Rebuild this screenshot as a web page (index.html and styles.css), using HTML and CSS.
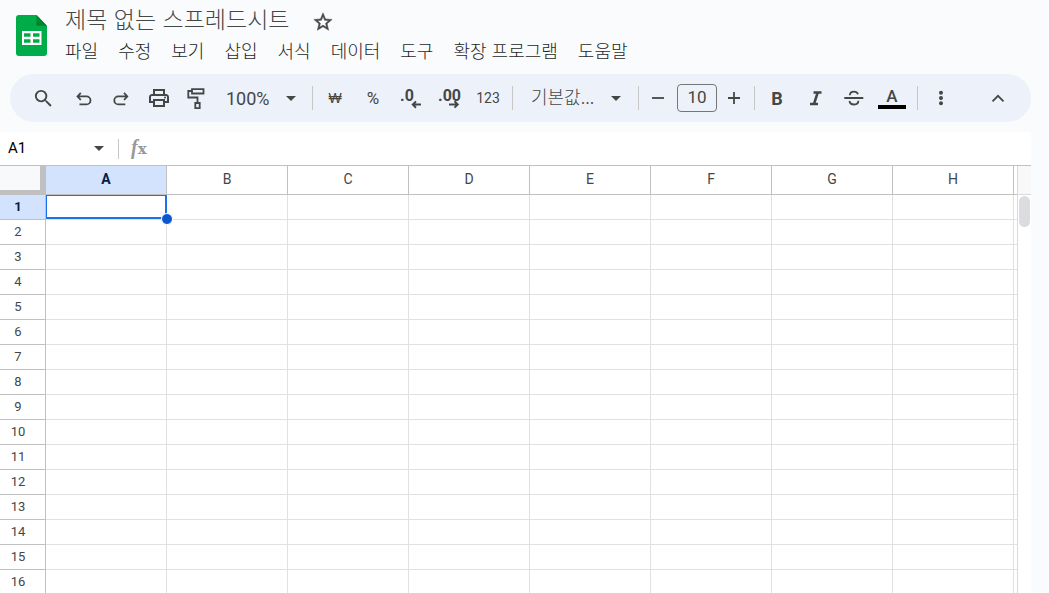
FILE: index.html
```html
<!DOCTYPE html>
<html lang="ko">
<head>
<meta charset="utf-8">
<title>제목 없는 스프레드시트</title>
<link rel="stylesheet" href="styles.css">
</head>
<body>
<header class="header">
  <svg class="logo" viewBox="0 0 31 41" aria-hidden="true">
    <path fill="#00ac47" d="M3 0H20.500L31 11V38a3 3 0 0 1-3 3H3a3 3 0 0 1-3-3V3a3 3 0 0 1 3-3z"/>
    <path fill="#00832d" d="M20.500 0L31 10.700H20.500z"/>
    <path fill="#fff" fill-rule="evenodd" d="M6 16H25.500V30H6zM8 18.300V21.700H14.500V18.300zM17 18.300V21.700H23.500V18.300zM8 24.200V27.700H14.500V24.200zM17 24.200V27.700H23.500V24.200z"/>
  </svg>
  <div class="header-main">
    <div class="title-row">
      <h1 class="title">제목 없는 스프레드시트</h1>
      <button class="star" aria-label="별표">
        <svg class="star-icon" viewBox="0 0 24 24"><path stroke="currentColor" stroke-width=".5" d="M22 9.240l-7.190-.62L12 2 9.190 8.630 2 9.240l5.460 4.730L5.820 21 12 17.270 18.180 21l-1.630-7.030L22 9.240zM12 15.400l-3.760 2.270 1-4.280-3.320-2.880 4.380-.38L12 6.100l1.710 4.040 4.380.38-3.320 2.880 1 4.280L12 15.400z"/></svg>
      </button>
    </div>
    <nav class="menu">
      <button>파일</button><button>수정</button><button>보기</button><button>삽입</button><button>서식</button><button>데이터</button><button>도구</button><button>확장 프로그램</button><button>도움말</button>
    </nav>
  </div>
</header>

<div class="toolbar" role="toolbar">
  <button class="tool tool-search" aria-label="검색"><svg class="search-icon" viewBox="0 0 24 24"><path d="M15.500 14h-.79l-.28-.27A6.471 6.471 0 0 0 16 9.500 6.500 6.500 0 1 0 9.500 16c1.610 0 3.090-.59 4.230-1.570l.27.28v.79l5 4.990L20.490 19l-4.990-5zm-6 0C7.010 14 5 11.990 5 9.500S7.010 5 9.500 5 14 7.010 14 9.500 11.990 14 9.500 14z"/></svg></button>
  <button class="tool" aria-label="실행취소"><svg class="icon line" viewBox="0 0 24 24"><path d="M9.800 6.800L6.500 10.400L9.800 14M6.500 10.400H15.500a4 4 0 0 1 0 8H8.500"/></svg></button>
  <button class="tool" aria-label="재실행"><svg class="icon line" viewBox="0 0 24 24"><path d="M15 6.800L18.300 10.400L15 14M18.300 10.400H9.300a4 4 0 0 0 0 8H16.300"/></svg></button>
  <button class="tool" aria-label="인쇄"><svg class="icon" viewBox="0 0 24 24"><path fill-rule="evenodd" d="M19 8h-1V3H6v5H5c-1.660 0-3 1.340-3 3v6h4v4h12v-4h4v-6c0-1.660-1.340-3-3-3zM8 5h8v3H8V5zm8 12v2H8v-4h8v2zm2-2v-2H6v2H4v-4c0-.55.45-1 1-1h14c.55 0 1 .45 1 1v4h-2z"/><circle cx="18" cy="11.500" r="1"/></svg></button>
  <button class="tool" aria-label="서식 복사"><svg class="icon line" viewBox="0 0 24 24"><path d="M7 3.200H18.500V7.500H7zM7 5H3.300V11.500H12.500V16.500M10.300 17H14.700V22.200H10.300z"/></svg></button>
  <label class="picker picker-zoom">
    <select aria-label="확대/축소"><option>100%</option></select>
    <svg class="caret" viewBox="0 0 10 5"><path d="M0 0H10L5 5z"/></svg>
  </label>
  <span class="sep"></span>
  <button class="tool tool-won">₩</button>
  <button class="tool tool-percent">%</button>
  <button class="tool" aria-label="소수점 이하 자릿수 감소"><svg class="decimal" viewBox="0 0 38 24"><text x="8" y="15">.0</text><path d="M29 18.600H21M24 15.400L20.800 18.600L24 21.800"/></svg></button>
  <button class="tool" aria-label="소수점 이하 자릿수 증가"><svg class="decimal" viewBox="0 0 38 24"><text x="8" y="15">.00</text><path d="M19 18.400H27.500M24.500 15.200L27.700 18.400L24.500 21.600"/></svg></button>
  <button class="tool tool-number">123</button>
  <span class="sep"></span>
  <label class="picker picker-font">
    <select aria-label="글꼴"><option>기본값...</option></select>
    <svg class="caret" viewBox="0 0 10 5"><path d="M0 0H10L5 5z"/></svg>
  </label>
  <span class="sep"></span>
  <button class="tool tool-step" aria-label="글꼴 크기 줄이기"><svg class="icon line" viewBox="0 0 24 24"><path d="M6 12H18"/></svg></button>
  <input class="font-size" aria-label="글꼴 크기" value="10">
  <button class="tool tool-step" aria-label="글꼴 크기 늘리기"><svg class="icon line" viewBox="0 0 24 24"><path d="M7 12H19M13 6V18"/></svg></button>
  <span class="sep"></span>
  <button class="tool tool-bold">B</button>
  <button class="tool" aria-label="기울임꼴"><svg class="icon line" viewBox="0 0 24 24"><path stroke-width="2.500" d="M10.500 6.500H18.500M7 18H15M14.700 6.500L11 18"/></svg></button>
  <button class="tool" aria-label="취소선"><svg class="icon line" viewBox="0 0 24 24"><path d="M3.300 12H22.300M8.800 9.200C9 6.800 10.800 5.700 13 5.700C15.100 5.700 16.400 6.700 17 8.300M8.400 15C8.800 17.300 10.600 18.500 13 18.500C15.600 18.500 17.400 17.200 17.400 14.800"/></svg></button>
  <button class="tool tool-color"><span>A</span><span class="color-bar"></span></button>
  <span class="sep"></span>
  <button class="tool" aria-label="더보기"><svg class="icon" viewBox="0 0 24 24"><circle cx="13" cy="6.700" r="2"/><circle cx="13" cy="12" r="2"/><circle cx="13" cy="17.300" r="2"/></svg></button>
  <button class="tool tool-collapse" aria-label="메뉴 숨기기"><svg class="icon line" viewBox="0 0 24 24"><path d="M6.500 15.300L12 9.800L17.500 15.300"/></svg></button>
</div>

<main class="sheet">
  <div class="formula-bar">
    <label class="name-box">
      <input aria-label="이름 상자" value="A1">
      <svg class="caret" viewBox="0 0 10 5"><path d="M0 0H10L5 5z"/></svg>
    </label>
    <span class="formula-sep"></span>
    <label class="fx" for="formula"><i>f</i><span>x</span></label>
    <input class="formula" id="formula">
  </div>
  <div class="grid-area">
    <div class="grid-view">
      <table class="grid">
        <thead>
          <tr><th class="corner"></th><th class="selected">A</th><th>B</th><th>C</th><th>D</th><th>E</th><th>F</th><th>G</th><th>H</th><th></th></tr>
        </thead>
        <tbody>
          <tr><th class="selected">1</th><td class="active"><span class="cursor"></span><span class="handle"></span></td><td></td><td></td><td></td><td></td><td></td><td></td><td></td><td></td></tr>
          <tr><th>2</th><td></td><td></td><td></td><td></td><td></td><td></td><td></td><td></td><td></td></tr>
          <tr><th>3</th><td></td><td></td><td></td><td></td><td></td><td></td><td></td><td></td><td></td></tr>
          <tr><th>4</th><td></td><td></td><td></td><td></td><td></td><td></td><td></td><td></td><td></td></tr>
          <tr><th>5</th><td></td><td></td><td></td><td></td><td></td><td></td><td></td><td></td><td></td></tr>
          <tr><th>6</th><td></td><td></td><td></td><td></td><td></td><td></td><td></td><td></td><td></td></tr>
          <tr><th>7</th><td></td><td></td><td></td><td></td><td></td><td></td><td></td><td></td><td></td></tr>
          <tr><th>8</th><td></td><td></td><td></td><td></td><td></td><td></td><td></td><td></td><td></td></tr>
          <tr><th>9</th><td></td><td></td><td></td><td></td><td></td><td></td><td></td><td></td><td></td></tr>
          <tr><th>10</th><td></td><td></td><td></td><td></td><td></td><td></td><td></td><td></td><td></td></tr>
          <tr><th>11</th><td></td><td></td><td></td><td></td><td></td><td></td><td></td><td></td><td></td></tr>
          <tr><th>12</th><td></td><td></td><td></td><td></td><td></td><td></td><td></td><td></td><td></td></tr>
          <tr><th>13</th><td></td><td></td><td></td><td></td><td></td><td></td><td></td><td></td><td></td></tr>
          <tr><th>14</th><td></td><td></td><td></td><td></td><td></td><td></td><td></td><td></td><td></td></tr>
          <tr><th>15</th><td></td><td></td><td></td><td></td><td></td><td></td><td></td><td></td><td></td></tr>
          <tr><th>16</th><td></td><td></td><td></td><td></td><td></td><td></td><td></td><td></td><td></td></tr>
        </tbody>
      </table>
    </div>
    <div class="scrollbar">
      <div class="scroll-head"></div>
      <div class="thumb"></div>
    </div>
  </div>
</main>
</body>
</html>
```
FILE: styles.css
```css
* { box-sizing: border-box; }

body {
  margin: 0;
  height: 100vh;
  overflow: hidden;
  display: flex;
  flex-direction: column;
  padding-right: 18px;
  background: #f9fbfd;
  color: #444746;
  font-family: Roboto, "Noto Sans CJK KR", sans-serif;
}

button, input, select {
  margin: 0;
  padding: 0;
  border: 0;
  background: none;
  color: inherit;
  font: inherit;
  outline: 0;
}

svg { display: block; fill: currentColor; }

/* Header */
.header { display: flex; flex: none; gap: 18px; padding: 0 16px 12px; }
.logo { width: 31px; height: 41px; margin-top: 15px; }
.title-row { display: flex; align-items: flex-start; gap: 23px; height: 38px; }
.title {
  margin: 0;
  padding-top: 2px;
  font: 300 23px/32px "Noto Sans CJK KR", sans-serif;
}
.star { padding-top: 11px; }
.star-icon { width: 22px; height: 22px; }
.menu { display: flex; gap: 20px; height: 24px; }
.menu button {
  color: #1f1f1f;
  font: 300 18px/24px "Noto Sans CJK KR", sans-serif;
  white-space: nowrap;
}

/* Toolbar */
.toolbar {
  display: flex;
  flex: none;
  align-items: center;
  height: 48px;
  margin-left: 10px;
  padding: 0 14px;
  border-radius: 24px;
  background: #edf2fa;
}
.tool {
  display: flex;
  flex: none;
  align-items: center;
  justify-content: center;
  width: 38px;
  height: 32px;
}
.tool-search { margin-right: 2px; }
.icon { width: 24px; height: 24px; }
.search-icon { width: 23px; height: 23px; }
.line { fill: none; stroke: currentColor; stroke-width: 1.8; }
.decimal { width: 38px; height: 24px; }
.decimal text { font: 700 16px Roboto, sans-serif; }
.decimal path { fill: none; stroke: currentColor; stroke-width: 2; }
.tool-won { font: 400 14px/16px "Liberation Sans", sans-serif; }
.tool-number { padding: 0 0 1px 2px; font-size: 14px; }
.tool-percent { font-size: 17px; }
.tool-bold { font-size: 18px; font-weight: 700; }
.tool-step { width: 31px; }
.tool-color {
  flex-direction: column;
  width: 39px;
  padding-left: 1px;
  font-size: 17px;
  font-weight: 500;
  line-height: 18px;
}
.color-bar { width: 28px; height: 4px; background: #000; }
.tool-collapse { margin-left: auto; }
.sep { flex: none; width: 1px; height: 24px; margin: 0 3px 0 6px; background: #c7c7c7; }
.picker { display: flex; flex: none; align-items: center; justify-content: space-between; padding: 0 10px; }
.picker select { appearance: none; flex: 1; min-width: 0; }
.picker-zoom { width: 90px; font-size: 18px; }
.picker-font { width: 116px; padding: 0 11px 0 15px; }
.picker-font select { padding-bottom: 4px; font: 300 18px/24px "Noto Sans CJK KR", sans-serif; }
.caret { flex: none; width: 10px; height: 5px; }
.font-size {
  width: 40px;
  height: 28px;
  margin-left: 4px;
  padding-bottom: 2px;
  border: 1px solid #747775;
  border-radius: 4px;
  text-align: center;
  font-size: 17px;
}

/* Formula bar */
.sheet { display: flex; flex: 1; flex-direction: column; min-height: 0; margin-top: 10px; background: #fff; }
.formula-bar {
  display: flex;
  flex: none;
  align-items: center;
  height: 34px;
  border-bottom: 1px solid #c0c0c0;
}
.name-box { display: flex; align-items: center; width: 118px; padding: 0 14px 0 8px; }
.name-box input { flex: 1; min-width: 0; padding-bottom: 2px; color: #000; font-size: 15px; }
.formula-sep { width: 1px; height: 20px; background: #c7c7c7; }
.fx {
  padding: 0 12px 2px;
  color: #999;
  font: 700 20px/24px "Liberation Serif", serif;
}
.fx span { font: 700 15px/24px "DejaVu Serif", serif; }
.formula { flex: 1; }

/* Grid */
.grid-area { display: flex; flex: 1; min-height: 0; }
.grid-view { flex: 1; min-width: 0; overflow: hidden; }
.grid { width: 1135px; table-layout: fixed; border-spacing: 0; color: #444746; font-size: 13px; line-height: 16px; }
.grid th, .grid td {
  height: 25px;
  padding: 0;
  border: solid #e1e1e1;
  border-width: 0 1px 1px 0;
}
.grid th { border-color: #c0c0c0; font-weight: 400; }
.grid thead th { height: 29px; padding-bottom: 2px; font-size: 14px; }
.grid tbody th { padding-right: 9px; }
.grid .selected { background: #d3e3fd; color: #041e49; font-weight: 700; }
.grid .corner {
  width: 46px;
  background: #f8f9fa;
  border: solid #c0c0c0;
  border-width: 0 6px 5px 0;
}
.active { position: relative; }
.cursor {
  position: absolute;
  inset: 0 -1px 0 0;
  border: solid #1a73e8;
  border-width: 1px 2px 2px 1px;
}
.handle {
  position: absolute;
  right: -7px;
  bottom: -6px;
  width: 12px;
  height: 12px;
  border: 1px solid #fff;
  border-radius: 50%;
  background: #0b57d0;
}
.scrollbar { flex: none; width: 14px; border-left: 1px solid #d9d9d9; }
.scroll-head { height: 29px; border-bottom: 1px solid #d9d9d9; background: #f8f8f8; }
.thumb { height: 31px; margin: 1px; border-radius: 6px; background: #dadce0; }
```
